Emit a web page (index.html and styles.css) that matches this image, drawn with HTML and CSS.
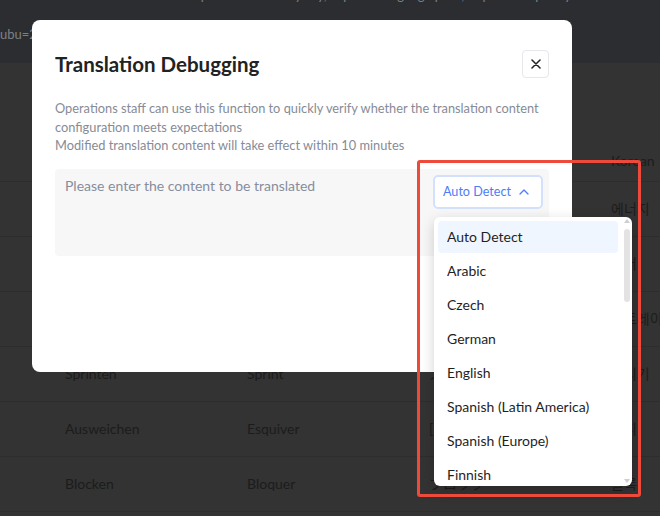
FILE: index.html
```html
<!DOCTYPE html>
<html lang="en">
<head>
    <meta charset="UTF-8">
    <meta name="viewport" content="width=device-width, initial-scale=1.0">
    <title>Translation Debugging</title>
    <link rel="stylesheet" href="styles.css">
</head>
<body>
    <!-- page behind the mask -->
    <div class="page">
        <div class="topbar">
            <p class="topbar-tip">Tips: edit entries by key, export a language pack, or preview quickly how the text will display in game before applying</p>
            <p class="topbar-url">ubu=2&amp;lang=de</p>
        </div>
        <div class="table">
            <div class="row row-head">
                <div class="cell">German</div>
                <div class="cell">French</div>
                <div class="cell">Japanese</div>
                <div class="cell">Korean</div>
            </div>
            <div class="row">
                <div class="cell">Energie</div>
                <div class="cell">Énergie</div>
                <div class="cell">エネルギー</div>
                <div class="cell">에너지</div>
            </div>
            <div class="row">
                <div class="cell">Hebel</div>
                <div class="cell">Levier</div>
                <div class="cell">レバー</div>
                <div class="cell">레버</div>
            </div>
            <div class="row">
                <div class="cell">Gerade</div>
                <div class="cell">Droite</div>
                <div class="cell">ストレート</div>
                <div class="cell">스트레이트</div>
            </div>
            <div class="row">
                <div class="cell">Sprinten</div>
                <div class="cell">Sprint</div>
                <div class="cell">スプリント</div>
                <div class="cell">달리기</div>
            </div>
            <div class="row">
                <div class="cell">Ausweichen</div>
                <div class="cell">Esquiver</div>
                <div class="cell">[回避]</div>
                <div class="cell">회피</div>
            </div>
            <div class="row">
                <div class="cell">Blocken</div>
                <div class="cell">Bloquer</div>
                <div class="cell">ブロック</div>
                <div class="cell">블록</div>
            </div>
        </div>
    </div>

    <!-- 弹窗 -->
    <div class="modal">
        <div class="modal-head">
            <h2 class="modal-title">Translation Debugging</h2>
            <button class="modal-close">
                <svg width="10" height="10" viewBox="0 0 10 10"><path d="M1 1L9 9M9 1L1 9" stroke="#262626" stroke-width="1.6" stroke-linecap="round"/></svg>
            </button>
        </div>
        <p class="modal-desc">Operations staff can use this function to quickly verify whether the translation content configuration meets expectations<br>Modified translation content will take effect within 10 minutes</p>
        <div class="input-box">
            <div class="placeholder">Please enter the content to be translated</div>
            <div class="lang-select">
                <span>Auto Detect</span>
                <svg width="10" height="6" viewBox="0 0 10 6"><path d="M1 5L5 1L9 5" fill="none" stroke="#4d7cf6" stroke-width="1.3" stroke-linecap="round" stroke-linejoin="round"/></svg>
            </div>
        </div>
    </div>

    <!-- 下拉列表 -->
    <div class="dropdown">
        <ul class="lang-list">
            <li class="active">Auto Detect</li>
            <li>Arabic</li>
            <li>Czech</li>
            <li>German</li>
            <li>English</li>
            <li>Spanish (Latin America)</li>
            <li>Spanish (Europe)</li>
            <li>Finnish</li>
        </ul>
        <div class="scrollbar">
            <i class="arrow-up"></i>
            <i class="thumb"></i>
            <i class="arrow-down"></i>
        </div>
    </div>

    <!-- 标注框 -->
    <div class="mark"></div>
</body>
</html>
```
FILE: styles.css
```css
*{
    margin: 0;
    padding: 0;
    box-sizing: border-box;
}
body{
    width: 660px;
    height: 516px;
    overflow: hidden;
    position: relative;
    font-family: Lato, "Noto Sans CJK KR", "Noto Sans CJK JP", sans-serif;
    background-color: #333;
}
.topbar{
    height: 63px;
    background-color: #2b2d31;
    color: #7d8086;
    font-size: 13px;
    line-height: 18px;
    overflow: hidden;
}
.topbar-tip{
    margin-top: -14px;
    padding-left: 190px;
    white-space: nowrap;
}
.topbar-url{
    margin-top: 21px;
    white-space: nowrap;
}
.table{
    color: #1c1c1c;
    font-size: 14px;
}
.row{
    display: flex;
    align-items: center;
    height: 55px;
    padding-left: 49px;
    border-bottom: 1px solid #2d2d2d;
    white-space: nowrap;
    overflow: hidden;
}
.row-head{
    height: 119px;
    align-items: flex-end;
    padding-bottom: 10px;
}
.cell{
    flex-shrink: 0;
    width: 182px;
    padding-left: 16px;
    line-height: 20px;
}

/* 弹窗 */
.modal{
    position: absolute;
    left: 32px;
    top: 20px;
    width: 540px;
    height: 352px;
    padding: 30px 23px 0;
    background-color: #fff;
    border-radius: 8px;
}
.modal-head{
    display: flex;
    justify-content: space-between;
    align-items: center;
    height: 28px;
}
.modal-title{
    font-size: 20.5px;
    font-weight: 700;
    color: #222;
    line-height: 28px;
}
.modal-close{
    display: flex;
    align-items: center;
    justify-content: center;
    width: 27px;
    height: 28px;
    background: #fff;
    border: 1px solid #e6e7eb;
    border-radius: 4px;
}
.modal-desc{
    margin-top: 21px;
    font-size: 12.8px;
    line-height: 18.5px;
    color: #868b96;
}
.input-box{
    display: flex;
    justify-content: space-between;
    align-items: flex-start;
    height: 87px;
    margin-top: 14px;
    padding: 6px 6px 6px 10px;
    background-color: #f7f7f8;
    border-radius: 4px;
}
.placeholder{
    margin-top: 1px;
    font-size: 14px;
    line-height: 20px;
    color: #878d9c;
}
.lang-select{
    display: flex;
    justify-content: space-between;
    align-items: center;
    width: 110px;
    height: 34px;
    padding: 0 12px 0 8px;
    background-color: #fff;
    border: 2px solid #d3e1fd;
    border-radius: 5px;
    font-size: 12.6px;
    color: #4d7cf6;
}

/* 下拉 */
.dropdown{
    position: absolute;
    left: 434px;
    top: 217px;
    width: 198px;
    height: 269px;
    display: flex;
    padding: 4px 1px 0 4px;
    background-color: #fff;
    border-radius: 6px;
    box-shadow: 0 4px 14px rgba(0,0,0,.18);
    overflow: hidden;
}
.lang-list{
    list-style: none;
    width: 180px;
    flex-shrink: 0;
}
.lang-list li{
    height: 32px;
    margin-bottom: 2px;
    padding-left: 9px;
    line-height: 32px;
    font-size: 14px;
    color: #1f1f1f;
    border-radius: 4px;
    white-space: nowrap;
}
.lang-list li.active{
    background-color: #eff6ff;
}
.scrollbar{
    display: flex;
    flex-direction: column;
    align-items: center;
    width: 9px;
    margin: -3px 0 0 4px;
}
.arrow-up,
.arrow-down{
    width: 0;
    height: 0;
    border-left: 3px solid transparent;
    border-right: 3px solid transparent;
}
.arrow-up{
    margin-top: 1px;
    border-bottom: 4px solid #cfcfcf;
}
.arrow-down{
    margin-top: auto;
    margin-bottom: 3px;
    border-top: 4px solid #cfcfcf;
}
.thumb{
    width: 6px;
    height: 73px;
    margin-top: 6px;
    background-color: #e3e3e3;
    border-radius: 3px;
}

/* 红色标注 */
.mark{
    position: absolute;
    left: 417px;
    top: 160px;
    width: 224px;
    height: 337px;
    border: 3px solid #ee4a3c;
    border-radius: 3px;
}
```
